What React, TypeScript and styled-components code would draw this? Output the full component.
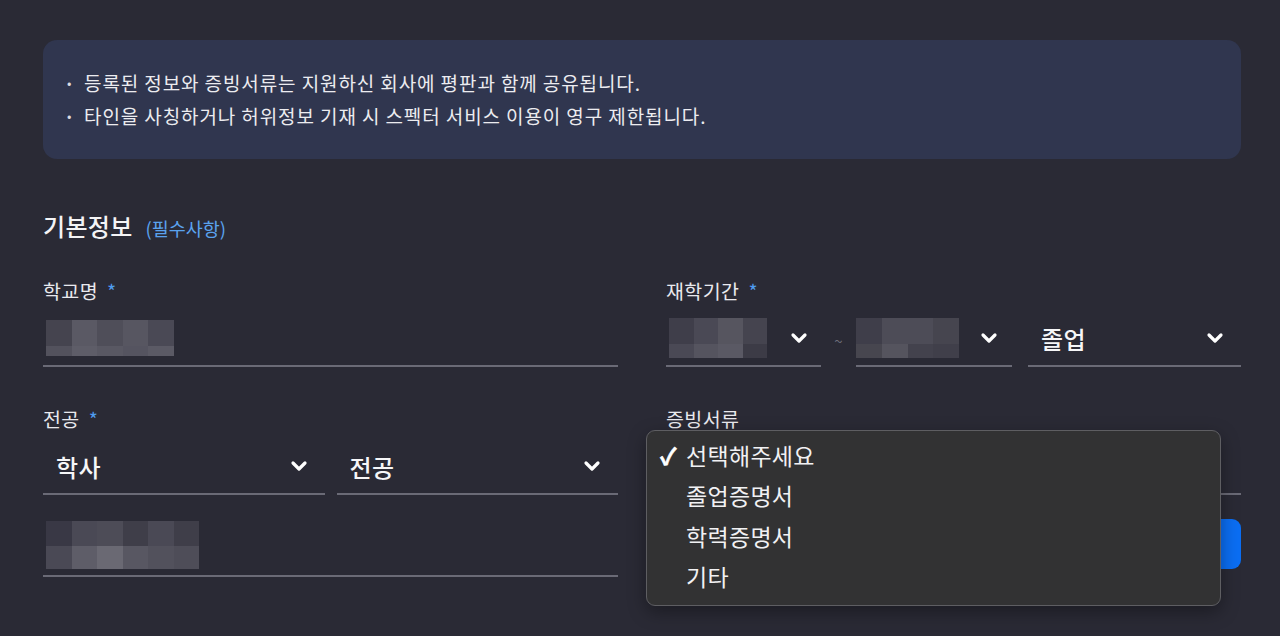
import React from "react";
import styled, { createGlobalStyle } from "styled-components";
import { ChevronDown } from "lucide-react";

const Global = createGlobalStyle`
  html, body { margin: 0; padding: 0; background: #2a2a35; }
  body {
    font-family: "Noto Sans CJK KR", "Noto Sans", sans-serif;
    color: #f2f2f2;
    -webkit-font-smoothing: antialiased;
  }
  * { box-sizing: border-box; }
`;

const Page = styled.div`
  width: 1280px;
  height: 636px;
  overflow: hidden;
  padding: 40px 39px 0 43px;
  background: #2a2a35;
`;

const Notice = styled.ul`
  margin: 0;
  list-style: none;
  background: #30364f;
  border-radius: 14px;
  padding: 26px 24px 27px 24px;
  height: 119px;
`;

const NoticeItem = styled.li`
  display: flex;
  align-items: center;
  font-size: 19px;
  letter-spacing: 0.9px;
  line-height: 33px;
  color: #ececf0;
  &::before {
    content: "•";
    width: 17px;
    font-size: 13px;
    letter-spacing: 0;
    color: #dcdce2;
  }
`;

const Heading = styled.div`
  margin-top: 51px;
  display: flex;
  align-items: baseline;
  gap: 13px;
`;

const HeadingTitle = styled.h2`
  margin: 0;
  font-size: 24px;
  line-height: 31px;
  font-weight: 500;
  letter-spacing: 0.3px;
  color: #f4f4f6;
`;

const HeadingNote = styled.span`
  font-size: 18.5px;
  color: #5aa2ee;
`;

const FormGrid = styled.div`
  margin-top: 37px;
  display: grid;
  grid-template-columns: 1fr 1fr;
  column-gap: 48px;
  row-gap: 39px;
`;

const Field = styled.div`
  position: relative;
  display: flex;
  flex-direction: column;
`;

const Label = styled.label`
  font-size: 19.5px;
  line-height: 26px;
  letter-spacing: 0.4px;
  color: #e9e9ee;
  margin-bottom: 7px;
`;

const Req = styled.span`
  color: #4f9cf0;
  margin-left: 9px;
`;

const Control = styled.div<{ $pl?: number; $pr?: number; $top?: boolean; $mt?: number }>`
  height: 56px;
  display: flex;
  align-items: ${(p) => (p.$top ? "flex-start" : "center")};
  justify-content: space-between;
  border-bottom: 2px solid #6a6a76;
  padding: 0 ${(p) => p.$pr ?? 14}px 0 ${(p) => p.$pl ?? 13}px;
  margin-top: ${(p) => p.$mt ?? 0}px;
  min-width: 0;
`;

const Value = styled.span`
  font-size: 24px;
  letter-spacing: 0.4px;
  color: #f6f6f8;
  font-weight: 500;
`;

const Chevron = styled(ChevronDown)`
  width: 24px;
  height: 24px;
  color: #ffffff;
  flex-shrink: 0;
  margin-left: auto;
`;

const Pair = styled.div`
  display: grid;
  grid-template-columns: 1fr 1fr;
  column-gap: 12px;
`;

const DateRow = styled.div`
  display: grid;
  grid-template-columns: 155px 35px 156px 1fr;
`;

const Tilde = styled.span`
  display: flex;
  align-items: center;
  justify-content: center;
  color: #6e6e7a;
  font-size: 15px;
  padding-top: 2px;
`;

const Spaced = styled.div`
  margin-left: 16px;
  display: flex;
  flex-direction: column;
`;

const MosaicGrid = styled.div<{ $cols: number; $w: number; $rows: string }>`
  display: grid;
  grid-template-columns: repeat(${(p) => p.$cols}, ${(p) => p.$w}px);
  grid-template-rows: ${(p) => p.$rows};
  flex-shrink: 0;
`;

const Cell = styled.div<{ $c: string }>`
  background: ${(p) => p.$c};
`;

type MosaicProps = { cols: number; w: number; rows: string; colors: string[] };
const Mosaic = ({ cols, w, rows, colors }: MosaicProps) => (
  <MosaicGrid $cols={cols} $w={w} $rows={rows}>
    {colors.map((c, i) => (
      <Cell key={i} $c={c} />
    ))}
  </MosaicGrid>
);

const AttachButton = styled.button`
  margin-top: 24px;
  height: 50px;
  border: none;
  border-radius: 9px;
  background: #0b6ef3;
  color: #fff;
  font-family: inherit;
  font-size: 18px;
`;

const Menu = styled.div`
  position: absolute;
  left: -20px;
  top: 24px;
  width: 575px;
  padding: 4px 0 9px;
  background: #323233;
  border: 1px solid #5e5e62;
  border-radius: 9px;
  box-shadow: 0 6px 18px rgba(0, 0, 0, 0.35);
  z-index: 5;
`;

const MenuItem = styled.div`
  height: 40.3px;
  display: flex;
  align-items: center;
  padding-left: 13px;
  font-size: 23px;
  letter-spacing: 0.3px;
  color: #f1f1f3;
`;

const Check = styled.span`
  width: 26px;
  font-size: 23px;
  font-weight: 700;
  color: #ffffff;
  -webkit-text-stroke: 0.6px #ffffff;
`;

export default function App() {
  return (
    <>
      <Global />
      <Page>
        <Notice>
          <NoticeItem>등록된 정보와 증빙서류는 지원하신 회사에 평판과 함께 공유됩니다.</NoticeItem>
          <NoticeItem>타인을 사칭하거나 허위정보 기재 시 스펙터 서비스 이용이 영구 제한됩니다.</NoticeItem>
        </Notice>

        <Heading>
          <HeadingTitle>기본정보</HeadingTitle>
          <HeadingNote>(필수사항)</HeadingNote>
        </Heading>

        <FormGrid>
          <Field>
            <Label>
              학교명<Req>*</Req>
            </Label>
            <Control $pl={3}>
              <Mosaic
                cols={5}
                w={25.6}
                rows="26px 10px"
                colors={[
                  "#45444f", "#5a5964", "#4f4e59", "#575661", "#4a4955",
                  "#53525d", "#5e5d68", "#595863", "#555460", "#5b5a65",
                ]}
              />
            </Control>
          </Field>

          <Field>
            <Label>
              재학기간<Req>*</Req>
            </Label>
            <DateRow>
              <Control $pl={3} $pr={10}>
                <Mosaic
                  cols={4}
                  w={24.5}
                  rows="26px 14px"
                  colors={[
                    "#3f3e4a", "#4a4955", "#56555f", "#45444f",
                    "#4a4955", "#55545f", "#5a5964", "#3c3b46",
                  ]}
                />
                <Chevron strokeWidth={3.2} />
              </Control>
              <Tilde>~</Tilde>
              <Control $pl={0} $pr={11}>
                <Mosaic
                  cols={4}
                  w={25.75}
                  rows="26px 14px"
                  colors={[
                    "#3f3e4a", "#4d4c57", "#4d4c57", "#46454f",
                    "#47464f", "#55545e", "#43424d", "#403f4a",
                  ]}
                />
                <Chevron strokeWidth={3.2} />
              </Control>
              <Spaced>
                <Control>
                  <Value>졸업</Value>
                  <Chevron strokeWidth={3.2} />
                </Control>
              </Spaced>
            </DateRow>
          </Field>

          <Field>
            <Label>
              전공<Req>*</Req>
            </Label>
            <Pair>
              <Control>
                <Value>학사</Value>
                <Chevron strokeWidth={3.2} />
              </Control>
              <Control>
                <Value>전공</Value>
                <Chevron strokeWidth={3.2} />
              </Control>
            </Pair>
            <Control $pl={3} $top $mt={26}>
              <Mosaic
                cols={6}
                w={25.5}
                rows="25px 23px"
                colors={[
                  "#393845", "#4a4955", "#4d4c57", "#3f3e49", "#4a4955", "#3f3e49",
                  "#4a4955", "#5e5d68", "#6a6973", "#585762", "#52515c", "#4e4d58",
                ]}
              />
            </Control>
          </Field>

          <Field>
            <Label>증빙서류</Label>
            <Control $pr={24}>
              <Chevron strokeWidth={3.2} />
            </Control>
            <AttachButton aria-label="파일 첨부" />
            <Menu role="listbox">
              <MenuItem>
                <Check>✓</Check>선택해주세요
              </MenuItem>
              <MenuItem>
                <Check />졸업증명서
              </MenuItem>
              <MenuItem>
                <Check />학력증명서
              </MenuItem>
              <MenuItem>
                <Check />기타
              </MenuItem>
            </Menu>
          </Field>
        </FormGrid>
      </Page>
    </>
  );
}
